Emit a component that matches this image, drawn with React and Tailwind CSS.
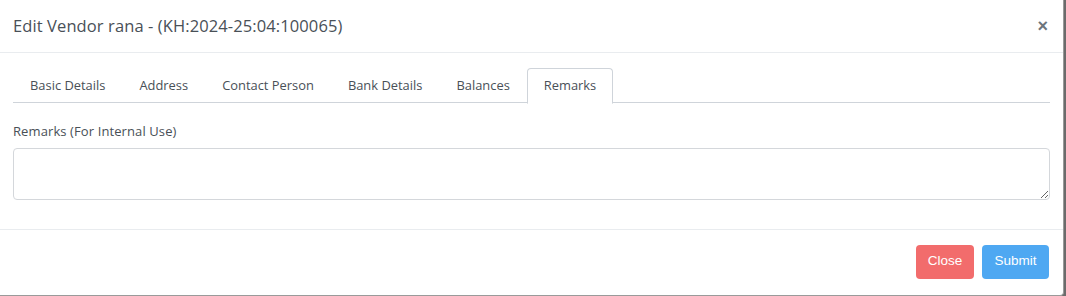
import React, { useState } from 'react';

const tabs = ['Basic Details', 'Address', 'Contact Person', 'Bank Details', 'Balances', 'Remarks'];

const App = () => {
  const [active, setActive] = useState('Remarks');
  const [remarks, setRemarks] = useState('');

  return (
    <div className="w-[1066px] h-[296px] bg-[#6b6b6b] font-['Open_Sans',sans-serif]">
      <div className="w-[1064px] h-[296px] bg-white border-r border-b border-[#9a9a9a] rounded-br-[4px] flex flex-col">
        {/* Header */}
        <div className="h-[53px] flex items-center justify-between px-[13px] border-b border-[#e9ecef]">
          <h5 className="text-[16.5px] text-[#495057] tracking-[0.1px]">Edit Vendor rana - (KH:2024-25:04:100065)</h5>
          <button className="text-[#6c757d] text-[18px] font-bold leading-none mr-[2px] font-['Liberation_Sans',sans-serif]">×</button>
        </div>

        {/* Body */}
        <div className="px-[13px] pt-[15px] pb-[29px] border-b border-[#e9ecef]">
          <div className="flex border-b border-[#cfd4da] h-[35px]">
            {tabs.map(t => (
              <button
                key={t}
                onClick={() => setActive(t)}
                className={`px-[16px] h-[35px] text-[12.9px] text-[#495057] rounded-t-[4px] ${
                  active === t ? 'border border-[#cfd4da] border-b-white bg-white -mb-px h-[36px]' : 'border border-transparent'
                }`}
              >
                {t}
              </button>
            ))}
          </div>

          <label className="block mt-[19px] text-[13px] tracking-[0.1px] text-[#495057]">Remarks (For Internal Use)</label>
          <textarea
            value={remarks}
            onChange={e => setRemarks(e.target.value)}
            className="mt-[6px] block w-full h-[52px] border border-[#d4d7db] rounded-[4px] px-3 py-2 text-[13px] outline-none"
          />
        </div>

        {/* Footer */}
        <div className="flex justify-end gap-[8px] px-[14px] pt-[15px]">
          <button className="h-[34px] w-[58px] rounded-[4px] bg-[#f26c6c] text-white text-[13.5px] font-['Liberation_Sans',sans-serif]">Close</button>
          <button className="h-[34px] w-[67px] rounded-[4px] bg-[#4ea8f2] text-white text-[13.5px] font-['Liberation_Sans',sans-serif]">Submit</button>
        </div>
      </div>
    </div>
  );
};

export default App;
